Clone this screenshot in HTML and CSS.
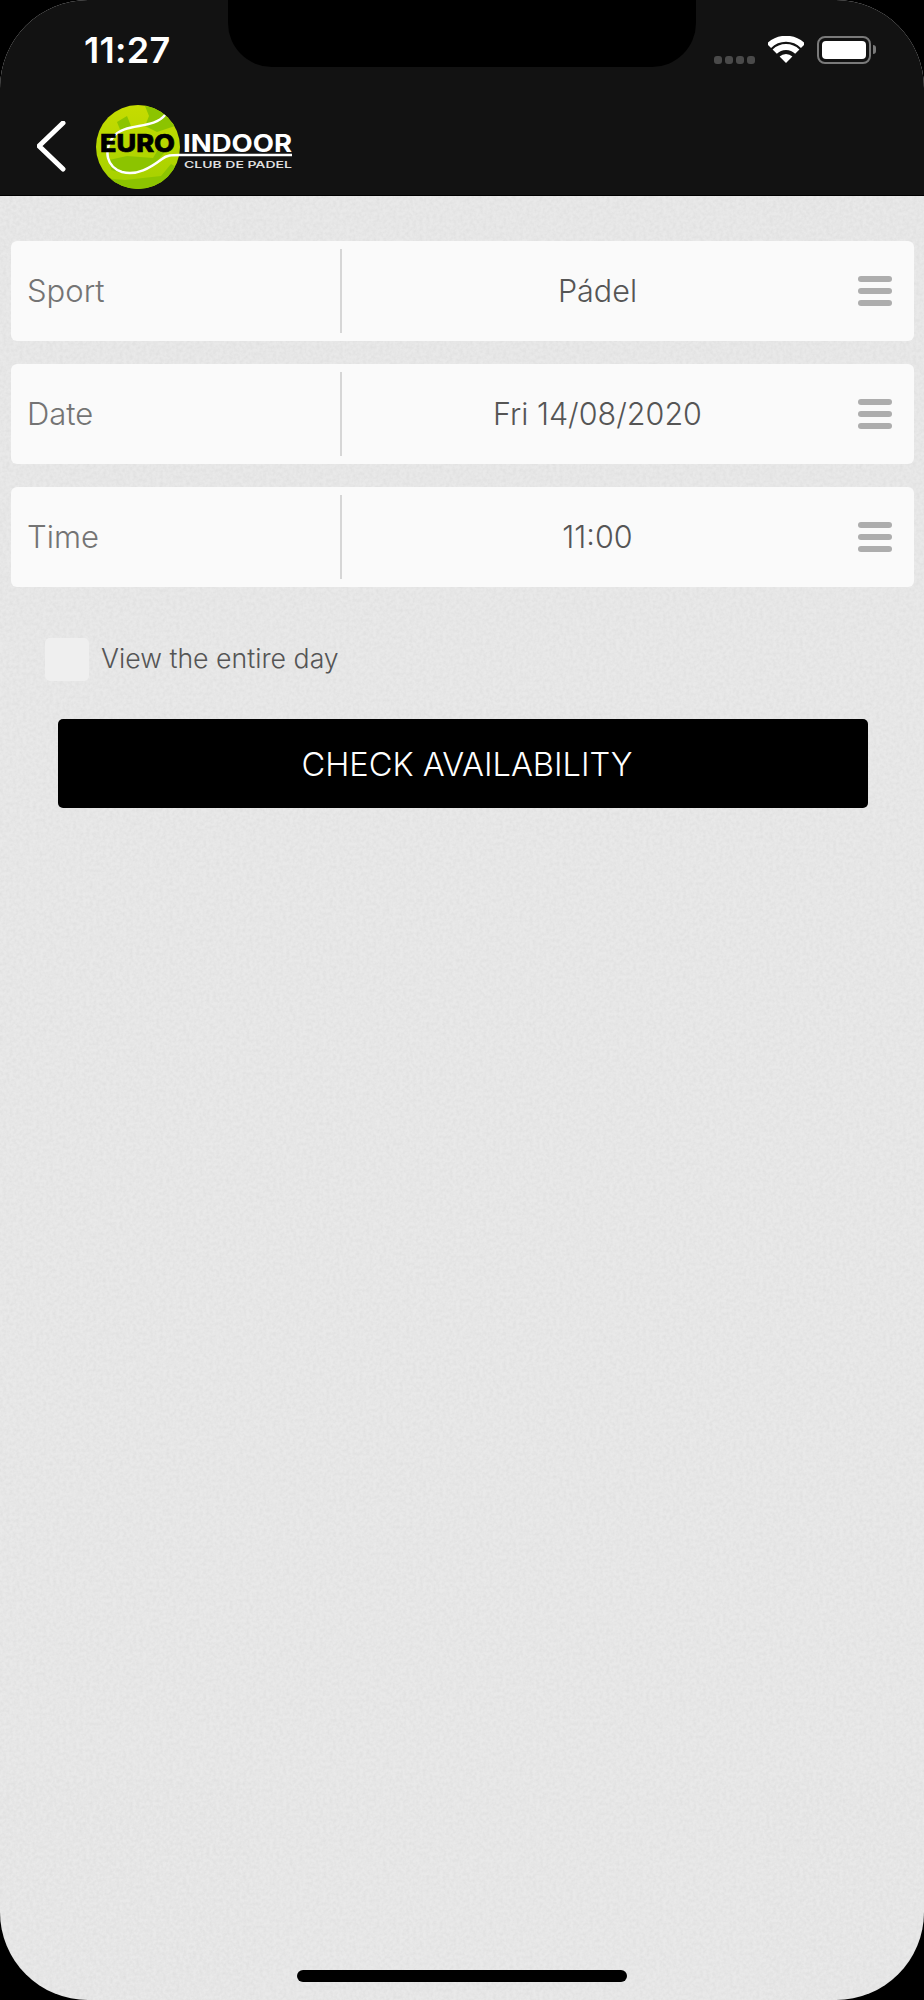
FILE: index.html
```html
<!DOCTYPE html>
<html lang="en">
<head>
    <meta charset="UTF-8">
    <meta name="viewport" content="width=device-width, initial-scale=1.0">
    <title>Euro Indoor</title>
    <link rel="stylesheet" href="styles.css">
</head>
<body>
    <div class="screen">
        <header class="header">
            <div class="notch"></div>
            <div class="status-bar">
                <span class="clock">11:27</span>
                <div class="status-icons">
                    <div class="signal"><i></i><i></i><i></i><i></i></div>
                    <svg class="wifi" width="36" height="27" viewBox="0 0 36 27">
                        <path d="M0.9 9.9 A24 24 0 0 1 35.1 9.9" fill="none" stroke="#fff" stroke-width="6"/>
                        <path d="M6.7 15.7 A16 16 0 0 1 29.3 15.7" fill="none" stroke="#fff" stroke-width="6"/>
                        <path d="M18 27 L11.6 20.6 A9 9 0 0 1 24.4 20.6 Z" fill="#fff"/>
                    </svg>
                    <div class="battery"><div class="battery-fill"></div></div>
                </div>
            </div>
            <nav class="nav">
                <svg class="back" width="32" height="52" viewBox="0 0 32 52">
                    <path d="M26 2 L2 25 L26 48" fill="none" stroke="#fff" stroke-width="5" stroke-linecap="round" stroke-linejoin="round"/>
                </svg>
                <svg class="logo" width="200" height="90" viewBox="0 0 200 90">
                    <defs>
                        <clipPath id="ball"><circle cx="43" cy="45" r="42"/></clipPath>
                        <linearGradient id="ballFill" x1="0" y1="0" x2="0" y2="1">
                            <stop offset="0" stop-color="#c6dc00"/>
                            <stop offset="1" stop-color="#a4d000"/>
                        </linearGradient>
                    </defs>
                    <circle cx="43" cy="45" r="42" fill="url(#ballFill)"/>
                    <g clip-path="url(#ball)" fill="#8cc400">
                        <path d="M50 4 L64 6 L80 24 L62 30 L50 24 L54 14 Z"/>
                        <path d="M22 20 L32 14 L36 24 L26 30 Z"/>
                        <path d="M14 58 L32 54 L58 56 L64 46 L70 50 L56 66 L30 72 L16 68 Z"/>
                        <path d="M8 76 L30 78 L66 74 L76 62 L90 70 L60 92 L20 92 Z"/>
                    </g>
                    <path d="M70 13 C58 28 30 20 18 35 C8 50 12 65 27 70 C42 74 55 66 67 57 C72 53 76 53 85 53 L197 53" fill="none" stroke="#fff" stroke-width="2.5"/>
                    <text class="logo-euro" x="5" y="50" textLength="75" lengthAdjust="spacingAndGlyphs">EURO</text>
                    <text class="logo-indoor" x="88" y="50" textLength="109" lengthAdjust="spacingAndGlyphs">INDOOR</text>
                    <text class="logo-club" x="89" y="66" textLength="108" lengthAdjust="spacingAndGlyphs">CLUB DE PADEL</text>
                </svg>
            </nav>
        </header>

        <main class="content">
            <svg class="grain" width="100%" height="100%">
                <filter id="noise">
                    <feTurbulence type="fractalNoise" baseFrequency="0.3" numOctaves="2" seed="4"/>
                    <feColorMatrix values="0 0 0 0 0.45  0 0 0 0 0.45  0 0 0 0 0.45  0.7 0 0 0 -0.22"/>
                </filter>
                <rect width="100%" height="100%" filter="url(#noise)"/>
            </svg>

            <div class="selects">
                <div class="select-row">
                    <span class="select-label">Sport</span>
                    <span class="select-value">Pádel</span>
                    <div class="menu-icon"><i></i><i></i><i></i></div>
                </div>
                <div class="select-row">
                    <span class="select-label">Date</span>
                    <span class="select-value">Fri 14/08/2020</span>
                    <div class="menu-icon"><i></i><i></i><i></i></div>
                </div>
                <div class="select-row">
                    <span class="select-label">Time</span>
                    <span class="select-value">11:00</span>
                    <div class="menu-icon"><i></i><i></i><i></i></div>
                </div>
            </div>

            <label class="check-row">
                <span class="checkbox"></span>
                <span class="check-label">View the entire day</span>
            </label>

            <button class="submit">CHECK AVAILABILITY</button>

            <div class="home-bar"></div>
        </main>
    </div>
</body>
</html>
```

FILE: styles.css
```css
html, body {
    margin: 0;
    background-color: #000;
}

body {
    font-family: Inter, "Noto Sans", sans-serif;
}

.screen {
    width: 924px;
    height: 2000px;
    display: flex;
    flex-direction: column;
    border-radius: 88px;
    overflow: hidden;
    background-color: #e9e9e9;
}

.header {
    position: relative;
    height: 195px;
    background-color: #121212;
    border-bottom: 1px solid #000;
    flex-shrink: 0;
}

.notch {
    position: absolute;
    left: 228px;
    top: 0;
    width: 468px;
    height: 67px;
    background-color: #000;
    border-radius: 0 0 44px 44px;
}

.status-bar {
    height: 102px;
    display: flex;
    justify-content: space-between;
    padding: 0 53px 0 84px;
}

.clock {
    margin-top: 30px;
    font-size: 36px;
    line-height: 40px;
    font-weight: 600;
    letter-spacing: 0.3px;
    color: #fff;
}

.status-icons {
    display: flex;
    align-items: flex-start;
    padding-top: 36px;
}

.signal {
    display: flex;
    gap: 3px;
    margin: 20px 13px 0 0;
}

.signal i {
    width: 8px;
    height: 8px;
    border-radius: 3px;
    background-color: #4a4a4a;
}

.wifi {
    margin-right: 13px;
}

.battery {
    position: relative;
    width: 54px;
    height: 28px;
    box-sizing: border-box;
    padding: 3px;
    border: 2px solid #7a7a7a;
    border-radius: 8px;
}

.battery::after {
    content: "";
    position: absolute;
    left: 54px;
    top: 7px;
    width: 3px;
    height: 9px;
    background-color: #7a7a7a;
    border-radius: 0 3px 3px 0;
}

.battery-fill {
    height: 100%;
    background-color: #fff;
    border-radius: 4px;
}

.nav {
    display: flex;
    align-items: flex-start;
    padding-left: 37px;
}

.back {
    margin-top: 19px;
}

.logo {
    margin-left: 26px;
}

.logo-euro {
    font-family: Inter, sans-serif;
    font-size: 24px;
    font-weight: 800;
    fill: #000;
    stroke: #000;
    stroke-width: 0.6px;
}

.logo-indoor {
    font-family: Inter, sans-serif;
    font-size: 24px;
    font-weight: 700;
    fill: #fff;
}

.logo-club {
    font-family: Inter, sans-serif;
    font-size: 9.5px;
    font-weight: 600;
    fill: #ddd;
}

.content {
    position: relative;
    flex: 1;
    display: flex;
    flex-direction: column;
    padding-top: 45px;
}

.grain {
    position: absolute;
    left: 0;
    top: 0;
    opacity: 0.4;
}

.selects {
    position: relative;
    display: flex;
    flex-direction: column;
    gap: 23px;
    margin: 0 10px 0 11px;
}

.select-row {
    height: 100px;
    display: flex;
    align-items: center;
    background-color: #fafafa;
    border-radius: 6px;
    padding-right: 22px;
}

.select-label {
    width: 313px;
    height: 84px;
    padding-left: 16px;
    line-height: 84px;
    border-right: 2px solid #d6d6d6;
    font-size: 31px;
    font-weight: 300;
    color: #747474;
}

.select-value {
    flex: 1;
    margin: -2px 5px 0 0;
    text-align: center;
    font-size: 30.5px;
    font-weight: 300;
    color: #555;
}

.menu-icon {
    display: flex;
    flex-direction: column;
    gap: 6px;
    width: 34px;
}

.menu-icon i {
    height: 6px;
    border-radius: 3px;
    background-color: #adadad;
}

.check-row {
    position: relative;
    display: flex;
    align-items: center;
    margin: 51px 0 0 45px;
}

.checkbox {
    width: 44px;
    height: 43px;
    background-color: #efefef;
    border-radius: 5px;
}

.check-label {
    margin: -4px 0 0 12px;
    font-size: 26.7px;
    font-weight: 300;
    color: #555;
}

.submit {
    position: relative;
    height: 89px;
    margin: 38px 56px 0 58px;
    padding: 0 0 0 8px;
    border: none;
    border-radius: 5px;
    background-color: #000;
    color: #fff;
    font-family: inherit;
    font-size: 32.6px;
    font-weight: 300;
}

.home-bar {
    position: relative;
    width: 330px;
    height: 12px;
    margin: auto 0 18px 297px;
    background-color: #000;
    border-radius: 6px;
}
```
